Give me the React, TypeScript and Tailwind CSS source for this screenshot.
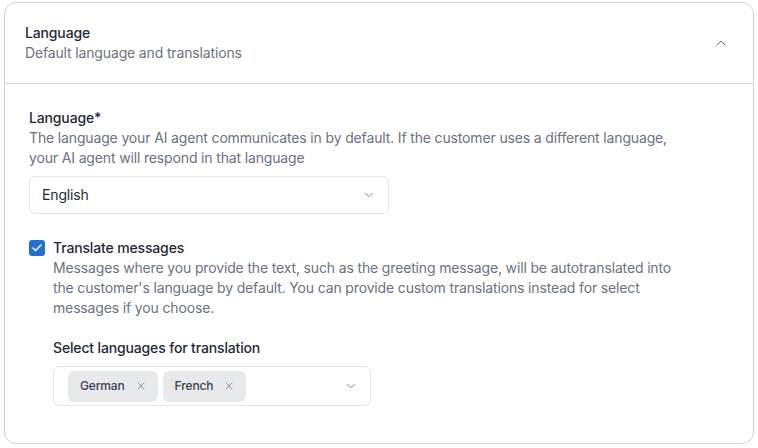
import { ChevronDown, ChevronUp, Check, X } from 'lucide-react'

const chips = ['German', 'French']

export default function App() {
  return (
    <div className="h-[448px] w-[758px] bg-white pl-[4px] pr-[4px] pt-[2px] font-['Inter',sans-serif] text-sm tracking-[-0.15px] text-[#1f2937]">
      <div className="h-[442px] rounded-xl border border-[#d1d5db]">
        <div className="flex items-center justify-between border-b border-[#d1d5db] py-5 pl-5 pr-6">
          <div>
            <div className="font-medium leading-5 text-[#1f2937]">Language</div>
            <div className="leading-5 text-[#6b7280]">Default language and translations</div>
          </div>
          <ChevronUp className="h-4 w-4 text-[#6b7280]" strokeWidth={1.5} />
        </div>

        <div className="px-6 pt-6">
          <div className="font-medium leading-5">Language*</div>
          <p className="max-w-[670px] leading-5 text-[#6b7280]">
            The language your AI agent communicates in by default. If the customer uses a different language,
            your AI agent will respond in that language
          </p>
          <div className="mt-2 flex h-[38px] w-[360px] items-center justify-between rounded-md border border-[#e5e7eb] px-3">
            <span className="text-[#1f2937]">English</span>
            <ChevronDown className="h-3.5 w-3.5 text-[#6b7280]" strokeWidth={1.5} />
          </div>

          <div className="mt-6 flex gap-2">
            <div className="mt-[2px] flex h-4 w-4 shrink-0 items-center justify-center rounded-[3px] bg-[#2270d2]">
              <Check className="h-3 w-3 text-white" strokeWidth={3} />
            </div>
            <div>
              <div className="font-medium leading-5">Translate messages</div>
              <p className="max-w-[632px] leading-5 text-[#6b7280]">
                Messages where you provide the text, such as the greeting message, will be autotranslated into
                the customer's language by default. You can provide custom translations instead for select
                messages if you choose.
              </p>
              <div className="mt-5 font-medium leading-5">Select languages for translation</div>
              <div className="mt-2 flex h-10 w-[318px] items-center justify-between rounded-md border border-[#e5e7eb] pl-[14px] pr-3">
                <div className="flex gap-[5px]">
                  {chips.map((c) => (
                    <div key={c} className="flex h-[31px] items-center gap-[10px] rounded-md bg-[#e8e9eb] pl-3 pr-[11px] text-xs font-medium text-[#374151]">
                      {c}
                      <X className="h-3 w-3 text-[#6b7280]" strokeWidth={1.5} />
                    </div>
                  ))}
                </div>
                <ChevronDown className="h-3.5 w-3.5 text-[#6b7280]" strokeWidth={1.5} />
              </div>
            </div>
          </div>
        </div>
      </div>
    </div>
  )
}
